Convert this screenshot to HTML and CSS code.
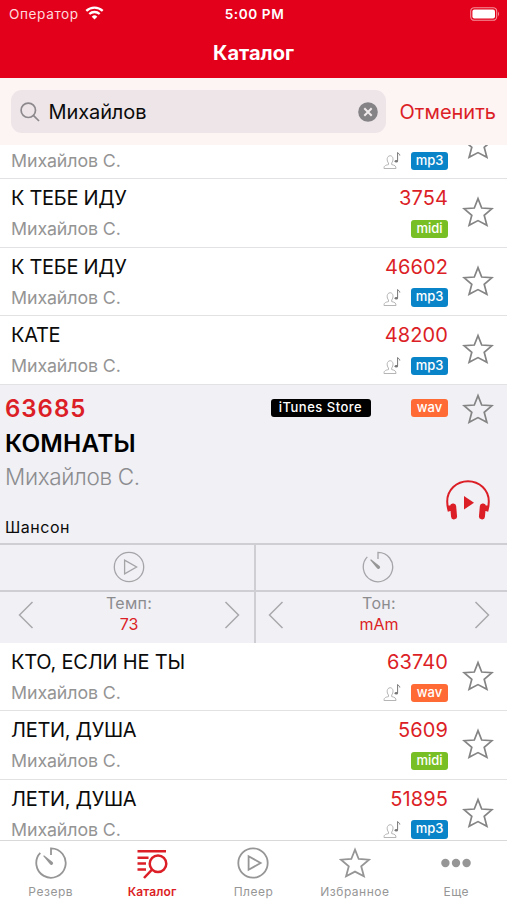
FILE: index.html
```html
<!DOCTYPE html>
<html lang="ru">
<head>
<meta charset="utf-8">
<title>Каталог</title>
<link rel="stylesheet" href="styles.css">
</head>
<body>
<svg class="defs" width="0" height="0">
  <symbol id="star" viewBox="0 0 32 32"><path d="M16 2.600 L19.700 12 L30 12.700 L22.200 19.300 L24.900 29.300 L16 24.600 L7.100 29.300 L9.800 19.300 L2 12.700 L12.300 12 Z"/></symbol>
  <symbol id="singer" viewBox="0 0 18 19"><path d="M1 17.500 H13 C13 15 12 14.300 8.700 13.600 V12 C10.500 10 10.800 5 7.200 4.700 C3.400 5 3.600 10 5.500 12 V13.600 C2 14.300 1 15 1 17.500 Z"/><path class="note" d="M14.600 10 V1.500 C15 3 17 2.600 16.800 4.500"/><ellipse class="dot" cx="13.300" cy="10.300" rx="1.700" ry="1.200"/></symbol>
  <symbol id="timer" viewBox="0 0 32 32"><path d="M16 8 V1.300 A14.700 14.700 0 1 1 5.300 5.900"/><path class="hand" d="M8.200 9 L9 8.300 L17.600 14.900 A1.700 1.700 0 0 1 15 17.300 Z"/></symbol>
  <symbol id="play" viewBox="0 0 32 32"><circle cx="16" cy="16" r="14.700"/><path d="M11.600 9.200 V22.800 L23.600 16 Z"/></symbol>
  <symbol id="prev" viewBox="0 0 16 28"><path d="M14.500 1 L1.500 14 L14.500 27"/></symbol>
  <symbol id="next" viewBox="0 0 16 28"><path d="M1.500 1 L14.500 14 L1.500 27"/></symbol>
</svg>
<div class="app">
  <header class="header">
    <div class="status">
      <div class="carrier"><span>Оператор</span>
        <svg class="wifi" viewBox="0 0 19 14"><path d="M1.300 4.800 A12 12 0 0 1 17.700 4.800"/><path d="M4.300 8 A7.700 7.700 0 0 1 14.700 8"/><path class="core" d="M9.500 13.600 L6.700 10.700 A4 4 0 0 1 12.300 10.700 Z"/></svg>
      </div>
      <div class="clock">5:00 PM</div>
      <svg class="battery" viewBox="0 0 30 14"><rect class="shell" x="0.700" y="0.700" width="26" height="12.600" rx="3.600"/><rect class="charge" x="2.400" y="2.400" width="22.600" height="9.200" rx="2"/><path class="tip" d="M28 4.600 Q30 7 28 9.400 Z"/></svg>
    </div>
    <h1 class="title">Каталог</h1>
  </header>
  <div class="search">
    <div class="field">
      <svg class="lens" viewBox="0 0 20 20"><circle cx="8.300" cy="8.300" r="7.200"/><path d="M13.600 13.600 L19 19"/></svg>
      <span class="query">Михайлов</span>
      <svg class="clear" viewBox="0 0 20 20"><circle cx="10" cy="10" r="9.800"/><path d="M6.300 6.300 L13.700 13.700 M13.700 6.300 L6.300 13.700"/></svg>
    </div>
    <span class="cancel">Отменить</span>
  </div>
  <main class="list">
    <div class="row first"><div class="info"><span class="artist">Михайлов С.</span></div><div class="meta"><div class="tags"><svg class="singer"><use href="#singer"/></svg><span class="tag mp3">mp3</span></div></div><svg class="star"><use href="#star"/></svg></div>
    <div class="row"><div class="info"><span class="song">К ТЕБЕ ИДУ</span><span class="artist">Михайлов С.</span></div><div class="meta"><span class="num">3754</span><div class="tags"><span class="tag midi">midi</span></div></div><svg class="star"><use href="#star"/></svg></div>
    <div class="row"><div class="info"><span class="song">К ТЕБЕ ИДУ</span><span class="artist">Михайлов С.</span></div><div class="meta"><span class="num">46602</span><div class="tags"><svg class="singer"><use href="#singer"/></svg><span class="tag mp3">mp3</span></div></div><svg class="star"><use href="#star"/></svg></div>
    <div class="row"><div class="info"><span class="song">КАТЕ</span><span class="artist">Михайлов С.</span></div><div class="meta"><span class="num">48200</span><div class="tags"><svg class="singer"><use href="#singer"/></svg><span class="tag mp3">mp3</span></div></div><svg class="star"><use href="#star"/></svg></div>
    <section class="detail">
      <div class="summary">
        <div class="about">
          <span class="d-num">63685</span>
          <span class="d-song">КОМНАТЫ</span>
          <span class="d-artist">Михайлов С.</span>
          <span class="genre">Шансон</span>
        </div>
        <div class="side">
          <div class="d-tags"><span class="tag itunes">iTunes Store</span><span class="tag wav">wav</span><svg class="star"><use href="#star"/></svg></div>
          <svg class="phones" viewBox="0 0 44 40"><path class="band" d="M2.800 31.500 C1.500 27 1.200 25 1.200 21.500 C1.200 10 10.500 1.300 22 1.300 S42.800 10 42.800 21.500 C42.800 25 42.500 27 41.200 31.500"/><rect class="cup" x="4.600" y="23.400" width="6" height="16" rx="2.800" transform="rotate(-5 7.600 31.400)"/><rect class="cup" x="33.400" y="23.400" width="6" height="16" rx="2.800" transform="rotate(5 36.400 31.400)"/><path class="cup" d="M1.800 25.500 H5.500 V31 H2.600 Z"/><path class="cup" d="M42.200 25.500 H38.500 V31 H41.400 Z"/><path class="cup" d="M18 16 V29.500 L28 22.700 Z"/></svg>
        </div>
      </div>
      <div class="controls">
        <div class="cell action"><svg class="round"><use href="#play"/></svg></div>
        <div class="cell action tone"><svg class="round"><use href="#timer"/></svg></div>
        <div class="cell stepper"><svg class="arrow"><use href="#prev"/></svg><div class="value"><span>Темп:</span><em>73</em></div><svg class="arrow"><use href="#next"/></svg></div>
        <div class="cell stepper tone"><svg class="arrow"><use href="#prev"/></svg><div class="value"><span>Тон:</span><em>mAm</em></div><svg class="arrow"><use href="#next"/></svg></div>
      </div>
    </section>
    <div class="row"><div class="info"><span class="song long">КТО, ЕСЛИ НЕ ТЫ</span><span class="artist">Михайлов С.</span></div><div class="meta"><span class="num">63740</span><div class="tags"><svg class="singer"><use href="#singer"/></svg><span class="tag wav">wav</span></div></div><svg class="star"><use href="#star"/></svg></div>
    <div class="row"><div class="info"><span class="song">ЛЕТИ, ДУША</span><span class="artist">Михайлов С.</span></div><div class="meta"><span class="num">5609</span><div class="tags"><span class="tag midi">midi</span></div></div><svg class="star"><use href="#star"/></svg></div>
    <div class="row"><div class="info"><span class="song">ЛЕТИ, ДУША</span><span class="artist">Михайлов С.</span></div><div class="meta"><span class="num">51895</span><div class="tags"><svg class="singer"><use href="#singer"/></svg><span class="tag mp3">mp3</span></div></div><svg class="star"><use href="#star"/></svg></div>
  </main>
  <nav class="tabs">
    <div class="tab"><svg class="icon"><use href="#timer"/></svg><span>Резерв</span></div>
    <div class="tab active"><svg class="icon catalog" viewBox="0 0 32 32"><path d="M1.500 4.300 H30 M1.500 10.700 H12.500 M1.500 16.500 H10 M1.500 22.500 H10"/><circle cx="22" cy="16.700" r="8.300"/><path d="M16 22.700 L8 31"/></svg><span>Каталог</span></div>
    <div class="tab"><svg class="icon"><use href="#play"/></svg><span>Плеер</span></div>
    <div class="tab"><svg class="icon"><use href="#star"/></svg><span>Избранное</span></div>
    <div class="tab"><svg class="icon more" viewBox="0 0 32 32"><circle cx="5.400" cy="16" r="4.200"/><circle cx="16" cy="16" r="4.200"/><circle cx="26.600" cy="16" r="4.200"/></svg><span>Еще</span></div>
  </nav>
</div>
</body>
</html>
```
FILE: styles.css
```css
* { box-sizing: border-box; }
body { margin: 0; font-family: Inter, "Liberation Sans", sans-serif; color: #0b0b0b; background: #fff; }
.defs { display: block; height: 0; }
svg { flex: none; display: block; fill: none; }
.app { width: 507px; height: 900px; display: flex; flex-direction: column; overflow: hidden; }

.header { flex: none; height: 78px; background: #e3001b; color: #fff; }
.status { height: 27px; display: grid; grid-template-columns: 1fr auto 1fr; align-items: center; padding: 0 7px 0 9px; font-size: 13.6px; }
.carrier { display: flex; align-items: center; gap: 6px; letter-spacing: 0.6px; color: #ffd9dc; }
.wifi { width: 19px; height: 14px; stroke: #fff; stroke-width: 2.3; margin-top: -2px; }
.wifi .core { fill: #fff; stroke: none; }
.clock { font-weight: 600; letter-spacing: 0.6px; }
.battery { width: 30px; height: 14px; justify-self: end; }
.shell { stroke: #f5929b; stroke-width: 1.1; }
.charge { fill: #fff; }
.tip { fill: #f5929b; }
.title { margin: 0; height: 51px; line-height: 52px; text-align: center; font-size: 20px; font-weight: 700; }

.search { flex: none; height: 67px; display: flex; align-items: center; padding: 0 11px; background: #fdf4f4; }
.field { width: 375px; height: 43px; border-radius: 11px; background: #ede5e8; display: flex; align-items: center; padding: 0 8px 0 9px; }
.lens { width: 20px; height: 20px; stroke: #8c888b; stroke-width: 1.7; }
.query { flex: 1; margin-left: 8.5px; font-size: 20px; letter-spacing: -0.1px; }
.clear { width: 20px; height: 20px; fill: #858386; }
.clear path { stroke: #f2ebed; stroke-width: 2; }
.cancel { margin-left: 14px; font-size: 20px; color: #dc1e26; white-space: nowrap; }

.list { flex: 1; min-height: 0; overflow: hidden; }
.row { height: 68.4px; display: flex; border-bottom: 1px solid #e2e2e4; padding: 0 13.5px 0 11px; }
.row.first { height: 34.4px; overflow: hidden; }
.first .artist { margin-top: 5px; }
.first .tags { margin-top: 6px; }
.first .star { margin-top: -17px; }
.info { flex: 1; display: flex; flex-direction: column; }
.song { font-size: 20px; line-height: 24px; margin-top: 7px; letter-spacing: -0.3px; }
.song.long { letter-spacing: -0.2px; }
.artist { font-size: 17.8px; line-height: 22px; margin-top: 8px; letter-spacing: -0.1px; color: #949494; }
.meta { display: flex; flex-direction: column; align-items: flex-end; }
.num { font-size: 20px; line-height: 24px; margin-top: 7px; letter-spacing: 0.1px; color: #dc1e26; }
.tags { display: flex; align-items: flex-end; gap: 10px; margin-top: 9px; height: 19px; }
.tag { width: 37px; height: 18.5px; border-radius: 3px; color: #fff; font-size: 13px; line-height: 17.5px; font-weight: 500; text-align: center; }
.mp3 { background: #0a84c8; }
.midi { background: #77bf24; }
.wav { background: #ff6a35; }
.itunes { width: 100px; background: #000; letter-spacing: 0.5px; }
.singer { width: 18px; height: 19px; stroke: #b5b5b5; stroke-width: 1; }
#singer .note { stroke: #777; }
#singer .dot { fill: #777; stroke: none; }
.star { width: 32px; height: 32px; margin: 17px 0 0 13.5px; stroke: #848484; stroke-width: 1.7; }

.detail { height: 258.5px; background: #f0f0f5; display: flex; flex-direction: column; }
.summary { height: 158.3px; display: flex; justify-content: space-between; padding: 0 13.5px 0 5px; }
.about { display: flex; flex-direction: column; }
.d-num { font-size: 24px; font-weight: 600; line-height: 30px; margin-top: 9px; letter-spacing: 1px; color: #dc1e26; }
.d-song { font-size: 24.4px; font-weight: 600; line-height: 30px; margin-top: 4.5px; letter-spacing: 0.2px; color: #000; }
.d-artist { font-size: 22.5px; font-weight: 300; line-height: 28px; margin-top: 5px; letter-spacing: -0.35px; color: #8c8c8f; }
.genre { font-size: 16px; line-height: 20px; margin-top: 25.5px; letter-spacing: 0.5px; }
.side { display: flex; flex-direction: column; align-items: flex-end; }
.d-tags { display: flex; align-items: flex-start; padding-top: 14px; }
.d-tags .wav { margin-left: 40.5px; }
.d-tags .star { margin-top: -6px; }
.phones { width: 44px; height: 40px; margin: 55.5px 3.5px 0 0; }
.band { stroke: #dc1e26; stroke-width: 2; }
.cup { fill: #dc1e26; }
.controls { flex: 1; display: grid; grid-template-columns: 253.5px 253.5px; grid-template-rows: 47.5px 1fr; }
.cell { display: flex; border-top: 2px solid #cfcfd3; }
.tone { border-left: 2px solid #cfcfd3; }
.action { align-items: center; justify-content: center; padding: 0 0 1px 4px; }
.action.tone { padding: 0 6px 1px 0; }
.round { width: 32px; height: 32px; stroke: #a5a5a8; stroke-width: 1.3; }
.stepper { justify-content: space-between; padding: 9px 13.5px 0 18px; }
.stepper.tone { padding-left: 12.5px; padding-right: 17px; }
.arrow { width: 16px; height: 28px; stroke: #a9a9ac; stroke-width: 1.5; }
.value { display: flex; flex-direction: column; align-items: center; margin-top: -8px; font-size: 16px; line-height: 20.5px; color: #8c8c8f; }
.value span { letter-spacing: 0.3px; }
.value em { font-style: normal; color: #dc1e26; }

.tabs { flex: none; height: 60px; display: grid; grid-template-columns: repeat(5, 1fr); border-top: 1px solid #d9d9d9; background: #fff; }
.tab { display: flex; flex-direction: column; align-items: center; padding-top: 6px; color: #969696; font-size: 12px; letter-spacing: 0.5px; }
.tab span { line-height: 16px; margin-top: 4.5px; }
.icon { width: 32px; height: 32px; stroke: #969696; stroke-width: 1.8; }
#timer .hand { fill: #969696; stroke: none; }
.active { color: #dc1e26; font-weight: 600; letter-spacing: 0.1px; }
.catalog { stroke: #dc1e26; stroke-width: 2.5; }
.more { fill: #969696; stroke: none; }
```
